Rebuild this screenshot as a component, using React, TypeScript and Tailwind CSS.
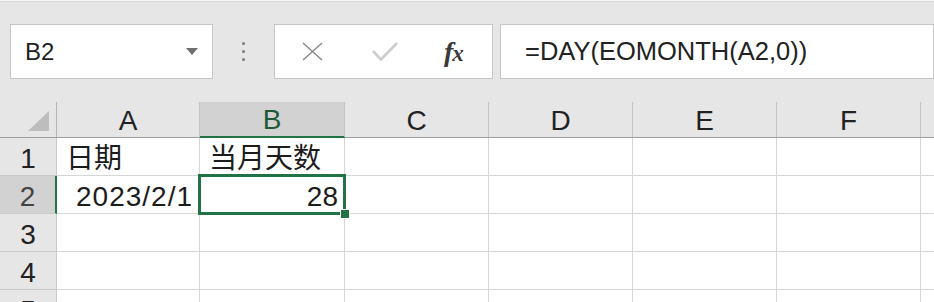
import React from 'react'

const font = { fontFamily: '"Liberation Sans", "Noto Sans CJK SC", sans-serif' }

const columns = [
  { label: 'A', w: 'w-[143px]' },
  { label: 'B', w: 'w-[145px]' },
  { label: 'C', w: 'w-[144px]' },
  { label: 'D', w: 'w-[144px]' },
  { label: 'E', w: 'w-[144px]' },
  { label: 'F', w: 'w-[144px]' },
]

type Cell = { text: string; align: 'left' | 'right'; extra?: string }

const rows: { n: number; cells: Record<string, Cell> }[] = [
  { n: 1, cells: { A: { text: '日期', align: 'left' }, B: { text: '当月天数', align: 'left' } } },
  { n: 2, cells: { A: { text: '2023/2/1', align: 'right', extra: 'tracking-[1px]' }, B: { text: '28', align: 'right' } } },
  { n: 3, cells: {} },
  { n: 4, cells: {} },
  { n: 5, cells: {} },
]

function FormulaBar() {
  return (
    <div className="flex items-start h-[100px] pt-[22px]">
      {/* name box */}
      <div className="ml-[10px] w-[203px] h-[55px] bg-white border border-[#c6c6c6] flex items-center justify-between pl-[14px] pr-[14px]">
        <span className="text-[24px] text-[#1f1f1f] leading-none" style={font}>B2</span>
        <svg width="12" height="7" viewBox="0 0 12 7">
          <path d="M0 0 L12 0 L6 7 Z" fill="#6f6f6f" />
        </svg>
      </div>

      {/* splitter dots */}
      <div className="w-[61px] h-[55px] flex flex-col items-center justify-center gap-[5px]">
        <div className="w-[3px] h-[3px] rounded-full bg-[#7a7a7a]" />
        <div className="w-[3px] h-[3px] rounded-full bg-[#7a7a7a]" />
        <div className="w-[3px] h-[3px] rounded-full bg-[#7a7a7a]" />
      </div>

      {/* cancel / enter / fx */}
      <div className="w-[219px] h-[55px] bg-white border border-[#c6c6c6] flex items-center">
        <svg className="ml-[27px]" width="21" height="19" viewBox="0 0 21 19">
          <path d="M1 1 L20 18 M20 1 L1 18" stroke="#8c8c8c" strokeWidth="1.6" fill="none" />
        </svg>
        <svg className="ml-[49px]" width="26" height="19" viewBox="0 0 26 19">
          <path d="M1 9 L9 17.5 L25 1" stroke="#cdcdcd" strokeWidth="2.6" fill="none" />
        </svg>
        <span
          className="ml-[46px] text-[28px] italic font-bold text-[#3a3a3a] leading-none tracking-[-1px]"
          style={{ fontFamily: '"Liberation Serif", serif' }}
        >
          f<span className="text-[23px]">x</span>
        </span>
      </div>

      {/* formula input */}
      <div className="ml-[7px] flex-1 h-[55px] bg-white border border-[#c6c6c6] flex items-center pl-[24px]">
        <span className="text-[25.5px] text-[#222] leading-none" style={font}>=DAY(EOMONTH(A2,0))</span>
      </div>
    </div>
  )
}

function Grid() {
  return (
    <div className="flex flex-col" style={font}>
      {/* column headers */}
      <div className="flex h-[36px] border-b border-[#9f9f9f]">
        <div className="w-[57px] shrink-0 border-r border-[#b4b4b4] flex items-end justify-end pr-[7px] pb-[6px]">
          <svg width="21" height="20" viewBox="0 0 21 20">
            <path d="M21 0 L21 20 L0 20 Z" fill="#bdbdbd" />
          </svg>
        </div>
        {columns.map((c) => (
          <div
            key={c.label}
            className={`${c.w} shrink-0 border-r border-[#c2c2c2] flex items-end justify-center pb-[2px] text-[28px] leading-none ${
              c.label === 'B'
                ? 'bg-[#d2d2d2] text-[#1e5a37] border-b-2 border-b-[#217346] -mb-px'
                : 'text-[#222]'
            }`}
          >
            {c.label}
          </div>
        ))}
        <div className="flex-1" />
      </div>

      {rows.map((r) => (
        <div key={r.n} className="flex h-[38px]">
          <div
            className={`w-[57px] shrink-0 border-b border-[#c9c9c9] flex items-end justify-center pb-[2px] text-[28px] leading-none ${
              r.n === 2
                ? 'bg-[#d2d2d2] text-[#444] border-r-2 border-r-[#217346]'
                : 'border-r border-[#b4b4b4] text-[#222]'
            }`}
          >
            {r.n}
          </div>
          {columns.map((c) => {
            const cell = r.cells[c.label]
            const selected = r.n === 2 && c.label === 'B'
            return (
              <div
                key={c.label}
                className={`${c.w} shrink-0 relative bg-white border-r border-b border-[#d6d6d6] flex items-end pb-[2px] text-[28px] leading-none text-[#1c1c1c] ${
                  cell?.align === 'right' ? 'justify-end pr-[6px]' : 'justify-start pl-[9px]'
                } ${selected ? 'z-10' : ''} ${cell?.extra ?? ''}`}
              >
                {cell?.text}
                {selected && (
                  <>
                    <div className="absolute -left-[2px] -top-[2px] right-[-2px] bottom-[-2px] border-[3px] border-[#217346]" />
                    <div className="absolute right-[-6px] bottom-[-6px] w-[10px] h-[10px] bg-[#217346] border-[1.5px] border-white" />
                  </>
                )}
              </div>
            )
          })}
          <div className="flex-1 bg-white border-b border-[#d6d6d6]" />
        </div>
      ))}
    </div>
  )
}

export default function App() {
  return (
    <div className="w-[934px] h-[302px] overflow-hidden bg-[#e6e6e6]">
      <div className="h-[2px] bg-[#f6f6f6] border-b border-[#d6d6d6]" />
      <FormulaBar />
      <Grid />
    </div>
  )
}
